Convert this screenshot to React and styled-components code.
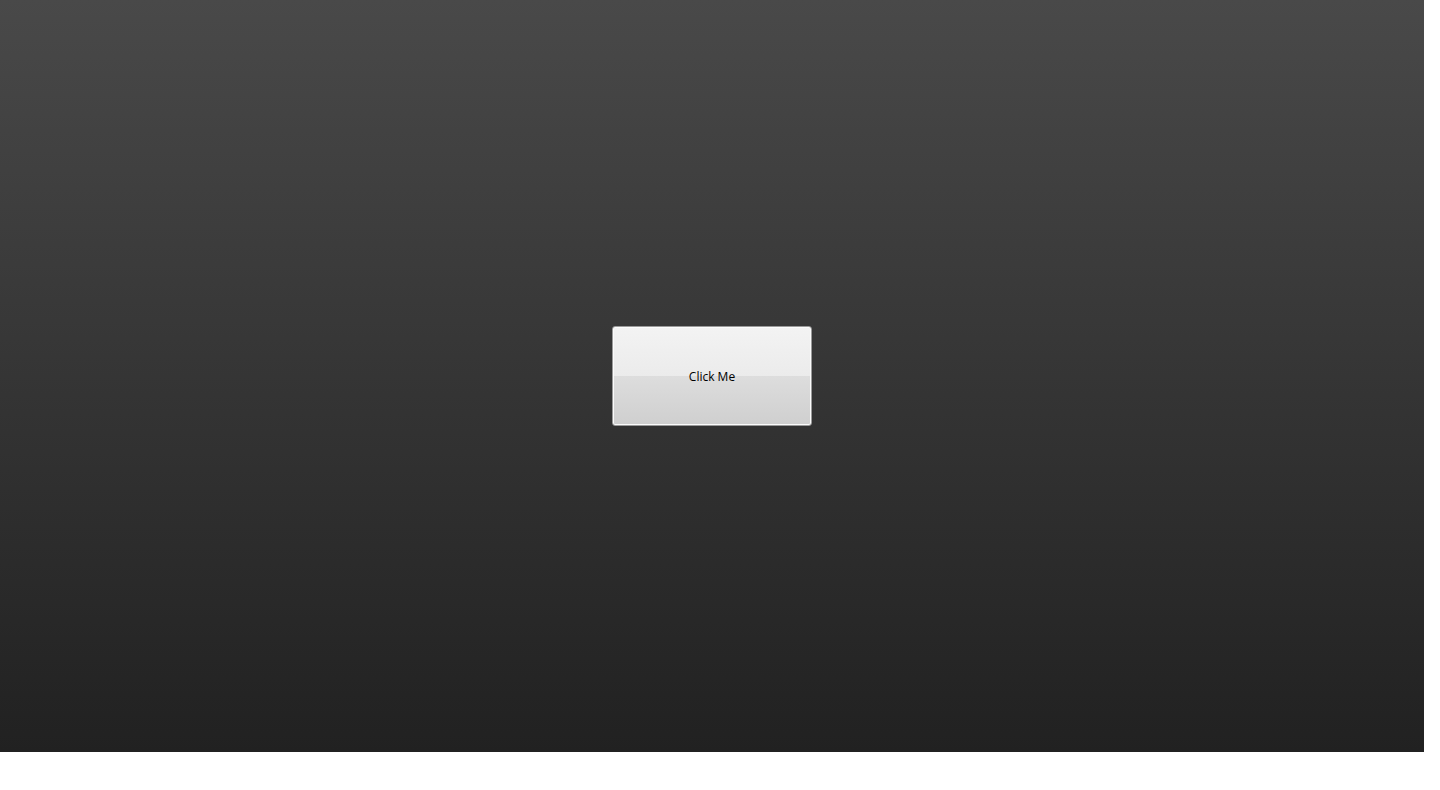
import styled, { createGlobalStyle } from 'styled-components'

const Global = createGlobalStyle`
  html, body {
    margin: 0;
    padding: 0;
    background: #ffffff;
  }
`

const Window = styled.div`
  width: 1424px;
  height: 752px;
  display: flex;
  align-items: center;
  justify-content: center;
  background: linear-gradient(180deg, #494949 0%, #212121 100%);
`

const Button = styled.button`
  width: 200px;
  height: 100px;
  padding: 0;
  border: 1px solid #9a9a9a;
  border-radius: 3px;
  box-shadow: inset 0 0 0 1px #fbfbfb;
  background: linear-gradient(
    180deg,
    #f3f3f3 0%,
    #ebebeb 50%,
    #dddddd 50%,
    #cfcfcf 100%
  );
  color: #000000;
  font-family: 'Open Sans', 'Noto Sans', sans-serif;
  font-size: 12px;
  cursor: pointer;
`

export default function App() {
  return (
    <>
      <Global />
      <Window>
        <Button>Click Me</Button>
      </Window>
    </>
  )
}
